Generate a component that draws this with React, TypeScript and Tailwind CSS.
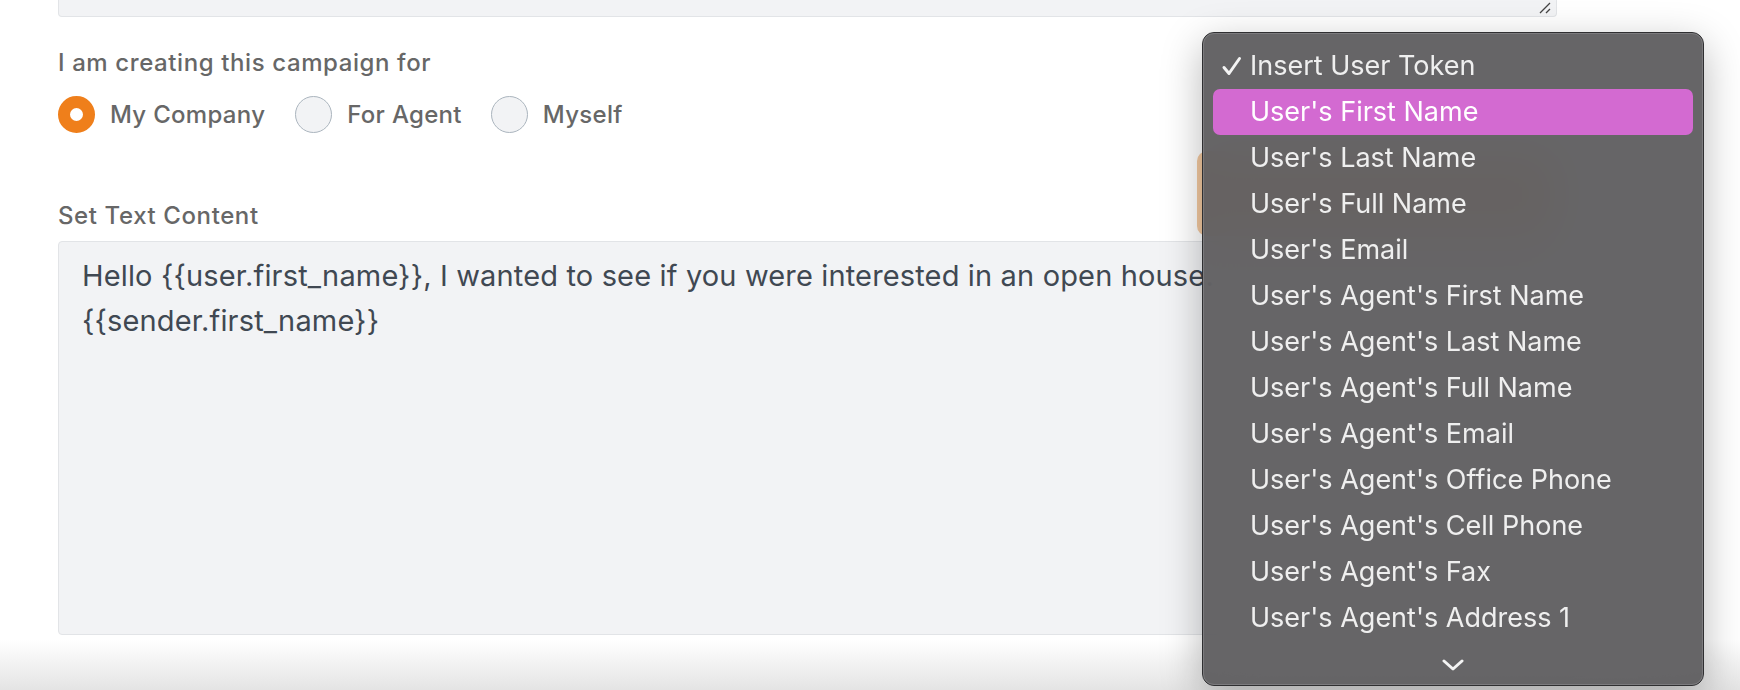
import React from 'react';

const TOKENS = [
    "User's First Name",
    "User's Last Name",
    "User's Full Name",
    "User's Email",
    "User's Agent's First Name",
    "User's Agent's Last Name",
    "User's Agent's Full Name",
    "User's Agent's Email",
    "User's Agent's Office Phone",
    "User's Agent's Cell Phone",
    "User's Agent's Fax",
    "User's Agent's Address 1",
];

function Radio({ label, checked }: { label: string; checked?: boolean }) {
    return (
        <label className="flex items-center gap-[15px]">
            {checked ? (
                <span className="w-[37px] h-[37px] rounded-full bg-white border-[12px] border-[#ef7f1b]" />
            ) : (
                <span className="w-[37px] h-[37px] rounded-full bg-[#f2f3f5] border-[1.5px] border-[#abb5be]" />
            )}
            <span className="text-[24px] font-medium tracking-[0.3px] text-[#676767]">{label}</span>
        </label>
    );
}

function TokenMenu() {
    return (
        <div className="absolute left-[1202px] top-[32px] w-[502px] h-[654px] rounded-[12px] border border-[#2f2f31] bg-[rgba(92,91,94,0.94)] backdrop-blur-xl shadow-[0_12px_40px_rgba(0,0,0,0.28)] text-[#efefef]">
            <div className="h-full rounded-[11px] border border-[#8b8a8d]/60 pt-[9px] px-[9px] flex flex-col">
                <div className="h-[46px] flex items-center text-[27px]">
                    <svg width="37" height="20" viewBox="0 0 37 20" className="shrink-0">
                        <path d="M11 11.5 L16 17.5 L26.5 2.5" fill="none" stroke="#f4f4f4" strokeWidth="3" strokeLinecap="round" strokeLinejoin="round" />
                    </svg>
                    <span>Insert User Token</span>
                </div>
                {TOKENS.map((t, i) => (
                    <div
                        key={t}
                        className={
                            i === 0
                                ? 'h-[46px] flex items-center pl-[37px] text-[27px] rounded-[7px] bg-[#d36ad1] text-white'
                                : 'h-[46px] flex items-center pl-[37px] text-[27px]'
                        }
                    >
                        {t}
                    </div>
                ))}
                <div className="flex justify-center mt-[18px]">
                    <svg width="22" height="12" viewBox="0 0 22 12">
                        <path d="M2 2 L11 10 L20 2" fill="none" stroke="#f4f4f4" strokeWidth="3" strokeLinecap="round" strokeLinejoin="round" />
                    </svg>
                </div>
            </div>
        </div>
    );
}

export default function App() {
    return (
        <div className="relative w-[1740px] h-[690px] overflow-hidden bg-white font-['Inter','Liberation_Sans',sans-serif]">
            <div className="ml-[58px] w-[1499px]">
                <div className="relative h-[17px] bg-[#f2f3f5] border border-t-0 border-[#e2e4e7] rounded-b-[4px]">
                    <svg width="14" height="12" viewBox="0 0 14 12" className="absolute right-[4px] bottom-[2px]">
                        <path d="M2 11 L12 1 M8 11 L12 7" stroke="#444" strokeWidth="1.3" />
                    </svg>
                </div>

                <div className="mt-[32px] text-[24px] leading-[28px] font-medium tracking-[0.6px] text-[#676767]">
                    I am creating this campaign for
                </div>
                <div className="mt-[19px] flex items-center">
                    <Radio label="My Company" checked />
                    <div className="ml-[30px]">
                        <Radio label="For Agent" />
                    </div>
                    <div className="ml-[29px]">
                        <Radio label="Myself" />
                    </div>
                </div>

                <div className="mt-[18px] flex items-end justify-between">
                    <div className="mb-[6px] text-[24px] leading-[28px] font-medium tracking-[0.6px] text-[#676767]">Set Text Content</div>
                    <button className="w-[360px] h-[85px] rounded-[10px] bg-[#f3c9a0]" />
                </div>

                <div className="mt-[5px] h-[394px] rounded-[4px] bg-[#f2f3f5] border border-[#e2e4e7] px-[23px] pt-[11px] text-[29px] leading-[45px] tracking-[0.15px] text-[#404852]">
                    <div className="whitespace-nowrap">
                        Hello {'{{user.first_name}}'}, I wanted to see if you were interested in an open house.
                    </div>
                    <div>{'{{sender.first_name}}'}</div>
                </div>
            </div>

            <div className="absolute left-0 right-0 bottom-0 h-[50px] bg-gradient-to-b from-white to-[#e4e4e4]" />

            <TokenMenu />
        </div>
    );
}
